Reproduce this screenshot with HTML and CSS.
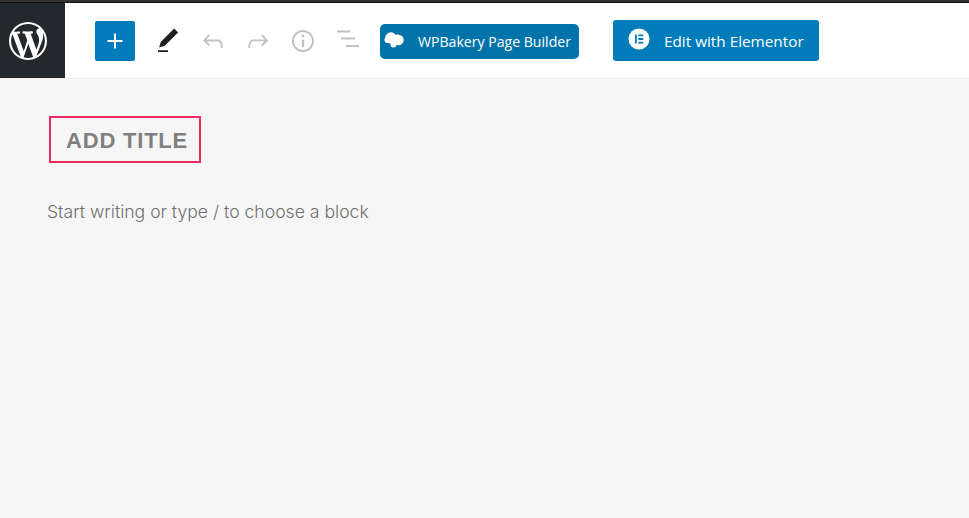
FILE: index.html
```html
<!DOCTYPE html>
<html lang="en">
<head>
<meta charset="utf-8">
<title>Add title</title>
<link rel="stylesheet" href="styles.css">
</head>
<body>
<div class="topline"></div>
<header class="toolbar">
  <a class="wp-logo" href="#" aria-label="WordPress">
    <svg viewBox="0 0 20 20" width="38" height="38"><path fill="#fff" d="M20 10c0-5.51-4.49-10-10-10C4.48 0 0 4.49 0 10c0 5.52 4.48 10 10 10 5.51 0 10-4.48 10-10zM7.78 15.37L4.37 6.22c.55-.02 1.17-.08 1.17-.08.5-.06.44-1.13-.06-1.11 0 0-1.45.11-2.37.11-.18 0-.37 0-.58-.01C4.12 2.69 6.87 1.11 10 1.11c2.33 0 4.45.87 6.05 2.34-.68-.11-1.65.39-1.65 1.58 0 .74.45 1.36.9 2.1.35.61.55 1.36.55 2.46 0 1.49-1.4 5-1.4 5l-3.03-8.37c.54-.02.82-.17.82-.17.5-.05.44-1.25-.06-1.22 0 0-1.44.12-2.38.12-.87 0-2.33-.12-2.33-.12-.5-.03-.56 1.2-.06 1.22l.92.08 1.26 3.41zM17.41 10c.24-.64.74-1.87.43-4.25.7 1.29 1.05 2.71 1.05 4.25 0 3.29-1.73 6.24-4.4 7.78.97-2.59 1.94-5.2 2.92-7.78zM6.1 18.09C3.12 16.65 1.11 13.53 1.11 10c0-1.3.23-2.48.72-3.59C3.25 10.3 4.67 14.2 6.1 18.09zm4.03-6.63l2.58 6.98c-.86.29-1.76.45-2.71.45-.79 0-1.57-.11-2.29-.33.81-2.38 1.62-4.74 2.42-7.1z"/></svg>
  </a>
  <div class="tools">
    <button class="add" aria-label="Add block">
      <svg viewBox="0 0 24 24" width="30" height="30"><path fill="#fff" d="M18 11.2h-5.2V6h-1.6v5.2H6v1.6h5.2V18h1.6v-5.2H18z"/></svg>
    </button>
    <span class="tool">
      <svg viewBox="0 0 24 24" width="30" height="30"><path fill="#1e1e1e" d="M20.1 5.1L16.9 2 6.2 12.7l-1.3 4.4 4.5-1.3L20.1 5.1zM4 20.8h8v-1.5H4v1.5z"/></svg>
    </span>
    <span class="tool muted">
      <svg viewBox="0 0 24 24" width="30" height="30"><path d="M18.3 11.7c-.6-.6-1.4-.9-2.3-.9H6.7l2.9-3.3-1.1-1-4.5 5L8.5 16l1-1-2.7-2.7H16c.5 0 .9.2 1.3.5 1 1 1 3.4 1 4.5v.3h1.5v-.2c0-1.5 0-4.3-1.5-5.7z"/></svg>
    </span>
    <span class="tool muted">
      <svg viewBox="0 0 24 24" width="30" height="30"><path d="M15.6 6.5l-1.1 1 2.9 3.3H8c-.9 0-1.7.3-2.3.9-1.4 1.5-1.4 4.2-1.4 5.6v.2h1.5v-.3c0-1.1 0-3.5 1-4.5.3-.3.7-.5 1.3-.5h9.2L14.5 15l1.1 1.1 4.6-4.6-4.6-5z"/></svg>
    </span>
    <span class="tool muted">
      <svg viewBox="0 0 24 24" width="30" height="30"><path d="M12 3.2c-4.8 0-8.8 3.9-8.8 8.8 0 4.8 3.9 8.8 8.8 8.8 4.8 0 8.8-3.9 8.8-8.800 0-4.800-4-8.800-8.800-8.800zm0 16c-4 0-7.2-3.3-7.2-7.2C4.8 8 8 4.8 12 4.8s7.2 3.3 7.2 7.2c0 4-3.2 7.2-7.2 7.2zM11 17h2v-6h-2v6zm0-8h2V7h-2v2z"/></svg>
    </span>
    <span class="tool muted">
      <svg viewBox="0 0 30 30" width="30" height="30"><path d="M4 4.500h13v2H4zM8 11.500h14v2H8zM13 19h13v2H13z"/></svg>
    </span>
  </div>
  <a class="wpb" href="#">
    <svg class="wpb-icon" viewBox="0 0 21 16" width="21" height="16" fill="#fff"><circle cx="7" cy="6" r="5.800"/><circle cx="14.500" cy="8" r="5.200"/><circle cx="3.500" cy="8" r="3"/><circle cx="9.500" cy="12.500" r="3"/><circle cx="13.500" cy="3.800" r="1.500"/></svg>
    <span>WPBakery Page Builder</span>
  </a>
  <a class="elementor" href="#">
    <svg viewBox="0 0 22 22" width="22" height="22"><circle cx="11" cy="11" r="10.500" fill="#fff"/><path fill="#007cba" d="M7 6.500h1.800v9H7zM10.300 6.500h5v1.800h-5zM10.300 10.100h5v1.800h-5zM10.300 13.700h5v1.800h-5z"/></svg>
    <span>Edit with Elementor</span>
  </a>
</header>
<main class="editor">
  <h1 class="title">ADD TITLE</h1>
  <p class="placeholder">Start writing or type / to choose a block</p>
</main>
</body>
</html>
```
FILE: styles.css
```css
* { box-sizing: border-box; }
html, body { height: 100%; }
body {
  margin: 0;
  background: #f6f6f6;
  font-family: "Open Sans", sans-serif;
  overflow: hidden;
}
.topline {
  height: 3px;
  background: linear-gradient(#333 0 2px, #111 2px);
}
.toolbar {
  display: flex;
  align-items: center;
  height: 76px;
  background: #fff;
  border-bottom: 1px solid #ececec;
}
.wp-logo {
  display: flex;
  align-items: center;
  width: 65px;
  height: 100%;
  padding-left: 9px;
  background: #23282d;
}
.tools {
  display: flex;
  align-items: center;
  margin-left: 30px;
}
.add {
  display: flex;
  align-items: center;
  justify-content: center;
  width: 40px;
  height: 40px;
  padding: 0;
  border: 0;
  border-radius: 2px;
  background: #007cba;
}
.tool {
  display: flex;
  justify-content: center;
  width: 45px;
}
.tool:first-of-type { margin-left: 10px; }
.muted svg { fill: #c2c2c2; }
.wpb {
  display: flex;
  align-items: center;
  width: 199px;
  height: 35px;
  margin: 2px 0 0 10px;
  padding: 0 0 0 4px;
  border-radius: 5px;
  background: #0073aa;
  color: #fff;
  font-size: 14.100px;
  text-decoration: none;
}
.wpb-icon { margin-right: 13px; margin-top: -3px; }
.elementor {
  display: flex;
  align-items: center;
  width: 206px;
  height: 41px;
  margin-left: 34px;
  padding-left: 15px;
  border-radius: 3px;
  background: #007cba;
  color: #fff;
  font-size: 15.300px;
  text-decoration: none;
}
.elementor svg { margin-right: 14px; margin-top: -3px; }
.editor { padding: 37px 0 0 47px; }
.title {
  width: 152px;
  margin: 0 0 0 2px;
  padding: 11px 0 8px 15px;
  border: 2px solid #ee2a5f;
  color: #7f7f7f;
  font-family: "Liberation Sans", sans-serif;
  font-size: 22px;
  font-weight: 700;
  line-height: 24px;
  letter-spacing: 0.800px;
  white-space: nowrap;
}
.placeholder {
  margin: 37px 0 0;
  color: #707070;
  font-family: "Inter", sans-serif;
  font-size: 17.600px;
  font-weight: 300;
  line-height: 24px;
}
```
